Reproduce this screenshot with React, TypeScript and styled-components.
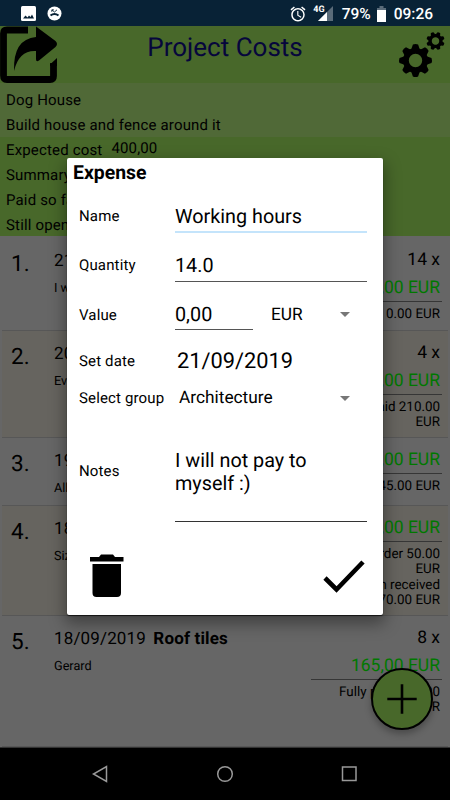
import React from "react";
import styled, { createGlobalStyle } from "styled-components";
import { MdAlarm } from "react-icons/md";

const GlobalStyle = createGlobalStyle`
  * { box-sizing: border-box; }
  body { margin: 0; background: #000; font-family: Roboto, sans-serif; color: #000; text-rendering: geometricPrecision; }
`;

const Screen = styled.div`
  position: relative;
  width: 450px;
  height: 800px;
  overflow: hidden;
  display: flex;
  flex-direction: column;
`;

const StatusBar = styled.div`
  height: 26px;
  flex: none;
  display: flex;
  align-items: center;
  background: #082236;
  color: #fff;
  padding: 1px 17px 0 20px;
`;
const StatusIcon = styled.svg<{ $gap?: number }>`
  display: block;
  flex: none;
  margin-right: ${(p) => p.$gap ?? 0}px;
`;
const StatusSpacer = styled.div`
  flex: 1;
`;
const AlarmIcon = styled(MdAlarm)`
  width: 18px;
  height: 18px;
  margin-right: 5px;
`;
const NetworkLabel = styled.span`
  font-size: 9px;
  font-weight: 700;
  line-height: 10px;
  align-self: flex-start;
  margin: 4px -7px 0 1px;
  z-index: 1;
`;
const StatusText = styled.span<{ $gap?: number }>`
  font-size: 15.5px;
  font-weight: 500;
  line-height: 26px;
  margin-right: ${(p) => p.$gap ?? 0}px;
`;

const Header = styled.header`
  height: 57px;
  flex: none;
  background: #48682a;
  display: flex;
  justify-content: space-between;
`;
const Title = styled.h1`
  margin: 0;
  font-size: 26px;
  font-weight: 400;
  line-height: 44px;
  color: #06063c;
  white-space: nowrap;
`;

const InfoLine = styled.div`
  height: 25px;
  display: flex;
  padding-left: 6px;
  font-size: 15px;
  line-height: 25px;
  letter-spacing: 0.16px;
  white-space: nowrap;
`;
const InfoBlock = styled.section<{ $soft?: boolean; $height: number }>`
  flex: none;
  height: ${(p) => p.$height}px;
  padding-top: ${(p) => (p.$soft ? 5 : 1)}px;
  background: ${(p) => (p.$soft ? "#506937" : "#48682a")};
`;
const InfoValue = styled.span`
  margin: -2px 0 0 9px;
`;

const List = styled.main`
  flex: none;
  height: 511px;
  padding: 0 2px;
  background: #666;
`;
const Row = styled.article<{ $height: number; $tint?: boolean; $top?: number }>`
  height: ${(p) => p.$height}px;
  padding-top: ${(p) => p.$top ?? 0}px;
  display: grid;
  grid-template-columns: 52px 1fr 142px;
  background: ${(p) => (p.$tint ? "#66645f" : "#666")};
  border-bottom: 1px solid #575757;
`;
const Index = styled.div`
  font-size: 22.5px;
  line-height: 30px;
  padding: 11px 0 0 9px;
  letter-spacing: 0.2px;
`;
const Entry = styled.div`
  padding-top: 12px;
  white-space: nowrap;
`;
const EntryTitle = styled.div`
  font-size: 17px;
  line-height: 22px;
  letter-spacing: 0.15px;
`;
const EntryName = styled.b`
  margin-left: 3px;
`;
const EntryNote = styled.div`
  font-size: 12.7px;
  line-height: 18px;
  margin-top: 8px;
`;
const Costs = styled.div<{ $counted: boolean }>`
  padding: ${(p) => (p.$counted ? 11 : 10)}px 8px 0 0;
  text-align: right;
`;
const Count = styled.div`
  font-size: 17.5px;
  line-height: 22px;
  margin-bottom: 5px;
`;
const Amount = styled.div`
  font-size: 17.5px;
  line-height: 24px;
  color: #007800;
`;
const CostNote = styled.div`
  margin: 1px -2px 0 5px;
  padding: 5px 2px 0 20px;
  border-top: 1px solid #363636;
  font-size: 13.4px;
  line-height: 15.3px;
  white-space: pre-line;
`;

const AddButton = styled.button`
  position: absolute;
  left: 371px;
  top: 668px;
  width: 62px;
  height: 62px;
  padding: 0;
  border: 2.6px solid #000;
  border-radius: 50%;
  background: #48682a;
  box-shadow: 0 4px 7px rgba(0, 0, 0, 0.28);
  display: grid;
  place-items: center;
`;

const NavBar = styled.nav`
  flex: 1;
  background: #000;
  border-top: 1px solid #333;
  display: flex;
  justify-content: center;
  align-items: center;
  gap: 105px;
`;

const Dialog = styled.form`
  position: absolute;
  left: 67px;
  top: 158px;
  width: 316px;
  height: 457px;
  padding: 2px 16px 0 12px;
  border-radius: 2px;
  background: #fff;
  box-shadow: 0 1px 1px rgba(0, 0, 0, 0.7), 0 7px 16px 2px rgba(0, 0, 0, 0.36);
`;
const DialogTitle = styled.h2`
  margin: 0 0 0 -6px;
  font-size: 19.4px;
  font-weight: 700;
  line-height: 26px;
  height: 26px;
`;
const Field = styled.div<{ $height: number }>`
  height: ${(p) => p.$height}px;
  display: grid;
  grid-template-columns: 95px 1fr;
  align-items: center;
`;
const Label = styled.label`
  font-size: 15px;
  line-height: 20px;
  letter-spacing: 0.14px;
  white-space: nowrap;
`;
const Input = styled.div<{ $focus?: boolean; $narrow?: boolean }>`
  width: ${(p) => (p.$narrow ? "78px" : "auto")};
  height: 33px;
  margin-left: 1px;
  font-size: 19.8px;
  line-height: 29px;
  padding-top: ${(p) => (p.$narrow ? 3 : 2)}px;
  border-bottom: ${(p) => (p.$focus ? "2px solid #c4e4fb" : "1px solid #555")};
`;
const ValueGroup = styled.div`
  display: grid;
  grid-template-columns: 97px 1fr;
  align-items: center;
  margin-top: -3px;
`;
const Select = styled.div<{ $indent?: boolean }>`
  display: flex;
  justify-content: space-between;
  align-items: center;
  padding: 0 17px 0 ${(p) => (p.$indent ? 5 : 0)}px;
  margin-top: ${(p) => (p.$indent ? 1 : 3)}px;
  font-size: 17.3px;
  line-height: 24px;
`;
const Caret = styled.span`
  border: 5.5px solid transparent;
  border-top-color: #777;
  border-bottom: 0;
`;
const DateValue = styled.div`
  padding: 2px 0 0 3px;
  font-size: 21.8px;
  line-height: 26px;
`;
const Notes = styled.div`
  height: 72px;
  margin: 30px 0 0 1px;
  font-size: 19.8px;
  line-height: 22.5px;
  border-bottom: 1px solid #333;
`;
const Actions = styled.div`
  display: flex;
  justify-content: space-between;
  padding: 31px 2px 0 11px;
`;

type Expense = {
  height: number;
  top?: number;
  tint?: boolean;
  date: string;
  name?: string;
  note: string;
  count?: string;
  amount: string;
  status: string;
};

const entries: Expense[] = [
  { height: 95, top: 2, date: "21", note: "I w", count: "14 x", amount: "0,00 EUR", status: "0.00 EUR" },
  { height: 107, tint: true, date: "20", note: "Eve", count: "4 x", amount: "210,00 EUR", status: "Paid 210.00\nEUR" },
  { height: 68, date: "19", note: "All", amount: "45,00 EUR", status: "45.00 EUR" },
  { height: 110, tint: true, date: "18", note: "Size", amount: "120,00 EUR", status: "Order 50.00\nEUR\nItem received\n70.00 EUR" },
  { height: 131, date: "18/09/2019", name: "Roof tiles", note: "Gerard", count: "8 x", amount: "165,00 EUR", status: "Fully paid 165.00\nEUR" },
];

const toothAngles = [0, 45, 90, 135, 180, 225, 270, 315];

function Gear({ cx, cy, r, turn = 0 }: { cx: number; cy: number; r: number; turn?: number }) {
  return (
    <g transform={`translate(${cx} ${cy}) rotate(${turn}) scale(${r / 16.5})`}>
      <circle r="9.6" fill="none" stroke="#000" strokeWidth="5.8" />
      {toothAngles.map((a) => (
        <path key={a} d="M-4.300-11L-2.600-16Q0-17 2.600-16L4.300-11Z" transform={`rotate(${a})`} />
      ))}
    </g>
  );
}

export default function App() {
  return (
    <Screen>
      <GlobalStyle />
      <StatusBar>
        <StatusIcon $gap={11} width="16" height="15" viewBox="0 0 16 15">
          <rect x="1" width="15" height="15" rx="1.5" fill="#fff" />
          <path d="M3 12.500l2.500-3 2 2 1.500-2 1.500 1.500 1.500-2.500 2 4z" fill="#082236" />
        </StatusIcon>
        <StatusIcon width="15" height="15" viewBox="0 0 15 15">
          <circle cx="7.5" cy="7.5" r="7" fill="#fff" />
          <path d="M3.500 9.600Q7.500 6.300 11.500 9.600" fill="none" stroke="#082236" strokeWidth="2" />
          <path d="M4.800 5.800V3.800M4.800 3.800h2M5 4l2.500 2L10 3.800" fill="none" stroke="#082236" strokeWidth=".9" />
        </StatusIcon>
        <StatusSpacer />
        <AlarmIcon />
        <NetworkLabel>4G</NetworkLabel>
        <StatusIcon $gap={9} width="15" height="15" viewBox="0 0 15 15">
          <path d="M15 0v15H0z" fill="#5a6b79" />
          <path d="M9 6v9H0z" fill="#fff" />
        </StatusIcon>
        <StatusText $gap={6}>79%</StatusText>
        <StatusIcon $gap={8} width="9" height="16" viewBox="0 0 9 16">
          <path d="M0 2h2.500V0h4v2H9v3H0z" fill="#5a6b79" />
          <path d="M0 4h9v12H0z" fill="#fff" />
        </StatusIcon>
        <StatusText>09:26</StatusText>
      </StatusBar>
      <Header>
        <svg width="147" height="57" viewBox="0 0 147 57">
          <path d="M28 4H7Q3.500 4 3.500 7.500v42Q3.500 53.500 7 53.500h43q3.500 0 3.500-3.500V37" fill="none" stroke="#000" strokeWidth="6.800" />
          <path d="M50 40v-1.500L57 32v8z" />
          <path d="M36 .5L55.500 15Q58.500 18 55.500 21L39 34.500Q36 36.500 36 33V25Q19 24 14 45 13 13 36 11z" />
        </svg>
        <Title>Project Costs</Title>
        <svg width="147" height="57" viewBox="303 26 147 57">
          <Gear cx={415.5} cy={60.5} r={16.5} />
          <Gear cx={435.5} cy={41} r={9.2} turn={22.5} />
        </svg>
      </Header>
      <InfoBlock $soft $height={54}>
        <InfoLine>Dog House</InfoLine>
        <InfoLine>Build house and fence around it</InfoLine>
      </InfoBlock>
      <InfoBlock $height={99}>
        <InfoLine>Expected cost<InfoValue>400,00</InfoValue></InfoLine>
        <InfoLine>Summary</InfoLine>
        <InfoLine>Paid so far</InfoLine>
        <InfoLine>Still open</InfoLine>
      </InfoBlock>
      <List>
        {entries.map((e, i) => (
          <Row key={i} $height={e.height} $tint={e.tint} $top={e.top}>
            <Index>{i + 1}.</Index>
            <Entry>
              <EntryTitle>{e.date} {e.name && <EntryName>{e.name}</EntryName>}</EntryTitle>
              <EntryNote>{e.note}</EntryNote>
            </Entry>
            <Costs $counted={!!e.count}>
              {e.count && <Count>{e.count}</Count>}
              <Amount>{e.amount}</Amount>
              <CostNote>{e.status}</CostNote>
            </Costs>
          </Row>
        ))}
      </List>
      <NavBar>
        <svg width="20" height="20" viewBox="0 0 20 20" fill="none" stroke="#999" strokeWidth="1.5">
          <path d="M16.500 2.500v15L3.500 10z" />
        </svg>
        <svg width="20" height="20" viewBox="0 0 20 20" fill="none" stroke="#999" strokeWidth="1.5">
          <circle cx="10" cy="10" r="7.300" />
        </svg>
        <svg width="20" height="20" viewBox="0 0 20 20" fill="none" stroke="#999" strokeWidth="1.5">
          <rect x="2.500" y="3" width="13.500" height="13.500" />
        </svg>
      </NavBar>
      <AddButton aria-label="Add expense">
        <svg width="30" height="30" viewBox="0 0 30 30" stroke="#000" strokeWidth="2.6">
          <path d="M15 .3v29.400M.3 15h29.400" />
        </svg>
      </AddButton>
      <Dialog>
        <DialogTitle>Expense</DialogTitle>
        <Field $height={60}><Label>Name</Label><Input $focus>Working hours</Input></Field>
        <Field $height={38}><Label>Quantity</Label><Input>14.0</Input></Field>
        <Field $height={61}>
          <Label>Value</Label>
          <ValueGroup>
            <Input $narrow>0,00</Input>
            <Select>EUR<Caret /></Select>
          </ValueGroup>
        </Field>
        <Field $height={31}><Label>Set date</Label><DateValue>21/09/2019</DateValue></Field>
        <Field $height={43}><Label>Select group</Label><Select $indent>Architecture<Caret /></Select></Field>
        <Field $height={104}><Label>Notes</Label><Notes>I will not pay to<br />myself :)</Notes></Field>
        <Actions>
          <svg width="34" height="44" viewBox="0 0 34 44">
            <path d="M0 3h9l2-2.500h12L25 3h8.500v4.500H0zM2.500 10h28.500v29q0 4-4 4H6.500q-4 0-4-4z" />
          </svg>
          <svg width="42" height="44" viewBox="0 0 42 44" fill="none" stroke="#000" strokeWidth="4.600">
            <path d="M2 24l11.500 11.500L40 8" />
          </svg>
        </Actions>
      </Dialog>
    </Screen>
  );
}
